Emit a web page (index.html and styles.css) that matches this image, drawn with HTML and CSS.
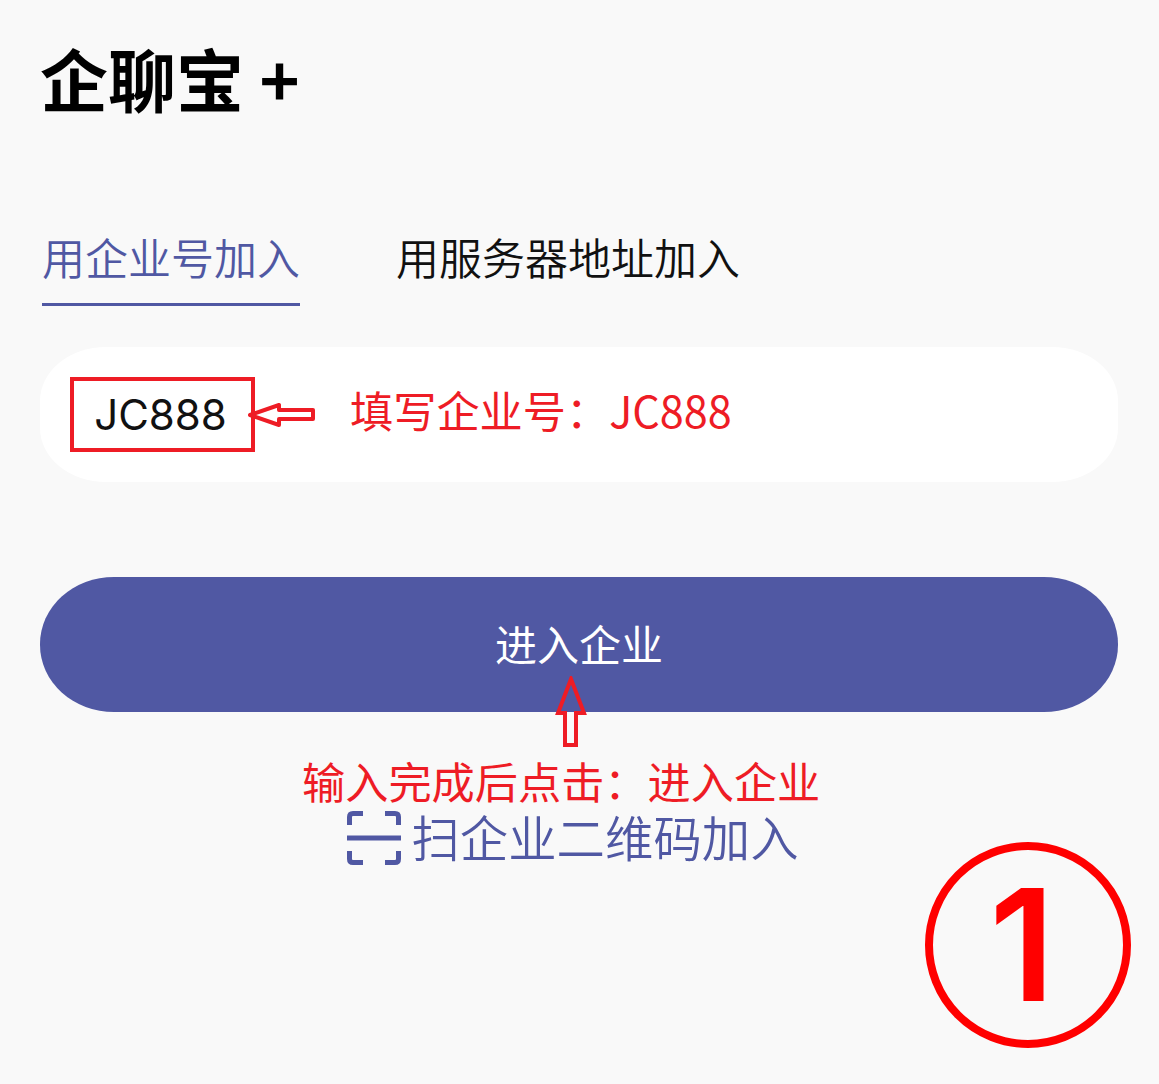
FILE: index.html
```html
<!DOCTYPE html>
<html lang="zh-CN">
<head>
    <meta charset="UTF-8">
    <meta name="viewport" content="width=device-width, initial-scale=1.0">
    <title>企聊宝+</title>
    <link rel="stylesheet" href="styles.css">
</head>
<body>

<div class="page">
    <h1 class="title">企聊宝 +</h1>

    <div class="tabs">
        <div class="tab active">用企业号加入</div>
        <div class="tab">用服务器地址加入</div>
    </div>

    <div class="input-box">
        <span class="code-box">JC888</span>
        <svg class="arrow-left" width="70" height="30" viewBox="0 0 70 30">
            <path d="M3 15 L32 5 L32 10 L66 10 L66 19 L32 19 L32 25 Z" fill="none" stroke="#ee1c25" stroke-width="4" stroke-linejoin="round"/>
        </svg>
        <span class="note">填写企业号：JC888</span>
    </div>

    <button class="enter-button">进入企业</button>

    <div class="hint">
        <svg class="arrow-up" width="32" height="72" viewBox="0 0 32 72">
            <path d="M16 3 L29 37 L21 37 L21 69 L10 69 L10 37 L3 37 Z" fill="none" stroke="#ee1c25" stroke-width="4"/>
        </svg>
        <div class="note">输入完成后点击：进入企业</div>
    </div>

    <div class="scan">
        <svg class="scan-icon" width="54" height="54" viewBox="0 0 54 54">
            <path d="M16 2.5 H6 Q2.5 2.5 2.5 6 V14 M38 2.5 H48 Q51.5 2.5 51.5 6 V14 M2.5 40 V48 Q2.5 51.5 6 51.5 H16 M51.5 40 V48 Q51.5 51.5 48 51.5 H38" fill="none" stroke="#5058a3" stroke-width="5"/>
            <path d="M0 27 H54" stroke="#5058a3" stroke-width="5"/>
        </svg>
        <span class="scan-text">扫企业二维码加入</span>
    </div>

    <div class="step">1</div>
</div>

</body>
</html>
```

FILE: styles.css
```css
* {
    margin: 0;
    padding: 0;
    box-sizing: border-box;
}

body {
    font-family: "Noto Sans CJK SC", sans-serif;
    background-color: #f9f9f9;
}

.page {
    position: relative;
    height: 1084px;
    padding: 37px 41px 0 40px;
    overflow: hidden;
}

.title {
    font-size: 68px;
    font-weight: 700;
    line-height: 82px;
    color: #000;
}

.tabs {
    display: flex;
    gap: 96px;
    margin-top: 106px;
    padding-left: 2px;
}

.tab {
    font-size: 43px;
    font-weight: 350;
    line-height: 62px;
    height: 81px;
    color: #111;
}

.tab.active {
    color: #5058a3;
    border-bottom: 3px solid #5058a3;
}

.input-box {
    display: flex;
    align-items: center;
    margin-top: 41px;
    height: 135px;
    padding-left: 30px;
    background-color: #fff;
    border-radius: 66px / 54px;
}

.code-box {
    width: 185px;
    height: 75px;
    border: 4px solid #ee1c25;
    padding-right: 4px;
    font-family: Inter, sans-serif;
    font-size: 42px;
    line-height: 67px;
    text-align: center;
    color: #111;
}

.arrow-left {
    margin-left: -8px;
}

.note {
    font-size: 43.2px;
    font-weight: 400;
    color: #ee1c25;
    line-height: 60px;
}

.input-box .note {
    margin-left: 33px;
    margin-bottom: 12px;
}

.enter-button {
    display: block;
    width: 100%;
    height: 135px;
    margin-top: 95px;
    padding-bottom: 4px;
    border: none;
    border-radius: 74px / 67px;
    background-color: #5058a3;
    color: #fff;
    font-family: "Noto Sans CJK SC", sans-serif;
    font-size: 42px;
}

.hint {
    position: absolute;
    left: 302px;
    top: 676px;
    width: 530px;
}

.arrow-up {
    display: block;
    margin-left: 253px;
}

.hint .note {
    margin-top: 8px;
    line-height: 48px;
}

.scan {
    display: flex;
    align-items: center;
    justify-content: center;
    gap: 10px;
    margin-top: 99px;
    padding-right: 12px;
    font-size: 48.4px;
    font-weight: 350;
    line-height: 48px;
    color: #5058a3;
}

.scan-text {
    margin-bottom: 4px;
}

.step {
    position: absolute;
    left: 925px;
    top: 842px;
    width: 206px;
    height: 206px;
    border: 8px solid #f00;
    border-radius: 50%;
    padding-right: 12px;
    text-align: center;
    font-family: Inter, sans-serif;
    font-weight: 600;
    font-size: 155px;
    line-height: 190px;
    color: #f00;
}
```
